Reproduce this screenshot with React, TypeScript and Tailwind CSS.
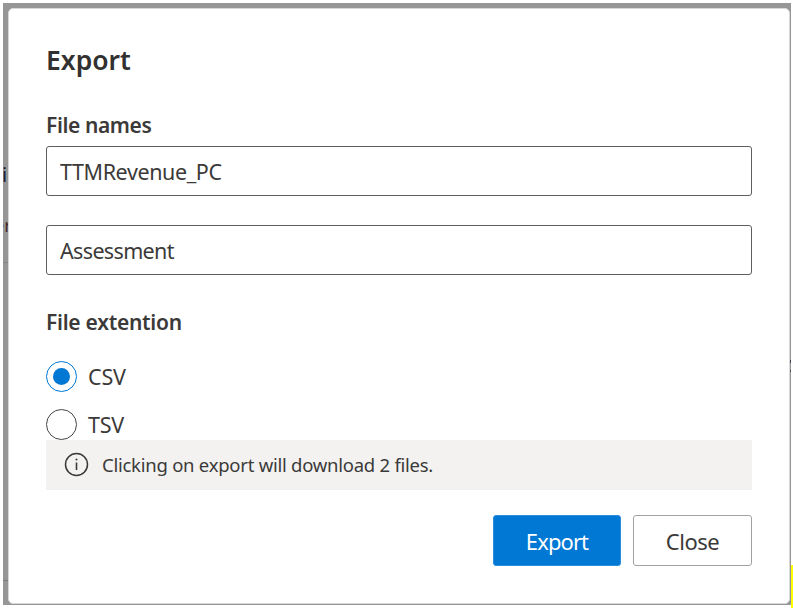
import { useState } from "react";

function Field({ initial, className }: { initial: string; className: string }) {
  const [value, setValue] = useState(initial);
  return (
    <input
      value={value}
      onChange={(e) => setValue(e.target.value)}
      className={`block h-[50px] w-[706px] rounded-[3px] border border-[#605e5c] bg-white pl-[13px] text-[21.5px] text-[#3b3a39] outline-none ${className}`}
    />
  );
}

function Radio({ label, checked, onSelect, spacing }: { label: string; checked: boolean; onSelect: () => void; spacing: string }) {
  return (
    <button role="radio" aria-checked={checked} onClick={onSelect} className="flex h-8 items-center gap-[11px]">
      <span
        className={`flex size-[31px] items-center justify-center rounded-full border-[1.5px] ${checked ? "border-[#0078d4]" : "border-[#484644]"}`}
      >
        {checked && <span className="size-[17px] rounded-full bg-[#0078d4]" />}
      </span>
      <span className={`pt-px text-[21.5px] leading-7 ${spacing}`}>{label}</span>
    </button>
  );
}

export default function App() {
  const [ext, setExt] = useState("CSV");
  return (
    <div className="relative h-[608px] w-[793px] overflow-hidden bg-white pl-[3px] pt-[3px] font-['Noto_Sans','Open_Sans',sans-serif] text-[#3b3a39]">
      <div className="relative h-[602px] w-[788px] overflow-hidden bg-[#969696] pl-[5px] pt-[5px]">
        <span className="absolute left-[-1px] top-[160px] text-[20px] leading-6 text-[#17203c]">i</span>
        <span className="absolute -left-[9px] top-[210px] text-[18px] leading-6 text-[#43272b]">er</span>
        <div className="absolute left-0 top-[259px] h-px w-[5px] bg-[#868686]" />
        <div className="absolute left-0 top-[577px] h-px w-[5px] bg-[#7c7c7c]" />
        <div className="absolute right-0 top-[357px] h-[3px] w-[2px] bg-[#38424f]" />
        <div className="absolute right-0 top-[367px] h-[2px] w-[2px] bg-[#4b4b4b]" />
        <main className="relative flex h-[596px] w-[782px] flex-col rounded-[5px] border border-[#d8d8d8] bg-white pl-[37px]">
          <h1 className="mt-[33px] h-9 whitespace-nowrap text-[26.5px] font-semibold leading-9 text-[#323130]">Export</h1>
          <h2 className="mt-[33px] h-7 whitespace-nowrap text-[21px] font-semibold leading-7 tracking-[-0.4px]">File names</h2>
          <Field initial="TTMRevenue_PC" className="mt-[7px] tracking-[-0.4px]" />
          <Field initial="Assessment" className="mt-[29px] tracking-[-0.65px]" />
          <h2 className="mt-[33px] h-7 whitespace-nowrap text-[21px] font-semibold leading-7 tracking-[-0.27px]">File extention</h2>
          <div role="radiogroup" className="mt-6 flex flex-col gap-4">
            <Radio label="CSV" checked={ext === "CSV"} onSelect={() => setExt("CSV")} spacing="tracking-[-0.2px]" />
            <Radio label="TSV" checked={ext === "TSV"} onSelect={() => setExt("TSV")} spacing="tracking-[-0.2px]" />
          </div>
          <div className="flex h-[50px] w-[706px] items-center bg-[#f3f2f1] pl-[18px]">
            <svg viewBox="0 0 25 25" className="size-[25px] -translate-y-px" fill="none" stroke="#3b3a39">
              <circle cx="12.5" cy="12.5" r="11" strokeWidth="1.5" />
              <path d="M12.5 10.5V18" strokeWidth="1.6" />
              <circle cx="12.5" cy="7.5" r="1" fill="#3b3a39" stroke="none" />
            </svg>
            <span className="ml-[13px] whitespace-nowrap text-[18.5px] tracking-[-0.25px]">Clicking on export will download 2 files.</span>
          </div>
          <div className="mt-[25px] flex w-[706px] justify-end gap-3">
            <button className="h-[51px] w-[128px] rounded-[3px] border border-[#2b8dde] bg-[#0078d4] pt-px text-[22px] tracking-[-0.9px] text-white">Export</button>
            <button className="h-[51px] w-[119px] rounded-[3px] border border-[#a3a1a0] bg-white pt-px text-[22px] tracking-[-0.5px]">Close</button>
          </div>
        </main>
      </div>
      <div className="absolute right-0 top-[565px] h-[43px] w-[2px] bg-[#ffff00]" />
    </div>
  );
}
